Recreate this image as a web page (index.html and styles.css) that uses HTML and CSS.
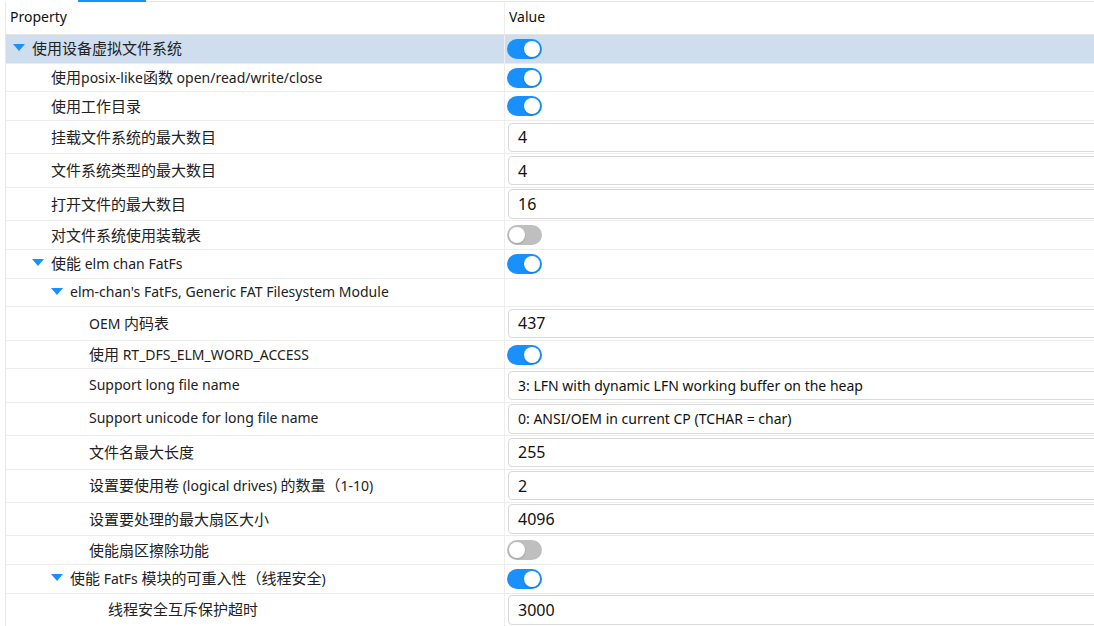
FILE: index.html
```html
<!DOCTYPE html>
<html lang="zh-CN">
<head>
<meta charset="utf-8">
<title>Property</title>
<link rel="stylesheet" href="styles.css">
</head>
<body>
<div class="topbar"><div class="tab-ind"></div><div class="tab-line"></div></div>
<div class="grid">
  <div class="row head"><div class="cell name">Property</div><div class="cell val">Value</div></div>

  <div class="row sw sel"><div class="cell name l0"><span class="caret"></span><span class="lbl"><span class="zh">使用设备虚拟文件系统</span></span></div><div class="cell val"><span class="toggle on"></span></div></div>
  <div class="row sw"><div class="cell name l1"><span class="sp"></span><span class="lbl"><span class="zh">使用</span>posix-like<span class="zh">函数</span> open/read/write/close</span></div><div class="cell val"><span class="toggle on"></span></div></div>
  <div class="row sw"><div class="cell name l1"><span class="sp"></span><span class="lbl"><span class="zh">使用工作目录</span></span></div><div class="cell val"><span class="toggle on"></span></div></div>
  <div class="row in"><div class="cell name l1"><span class="sp"></span><span class="lbl"><span class="zh">挂载文件系统的最大数目</span></span></div><div class="cell val"><div class="input num">4</div></div></div>
  <div class="row in"><div class="cell name l1"><span class="sp"></span><span class="lbl"><span class="zh">文件系统类型的最大数目</span></span></div><div class="cell val"><div class="input num">4</div></div></div>
  <div class="row in"><div class="cell name l1"><span class="sp"></span><span class="lbl"><span class="zh">打开文件的最大数目</span></span></div><div class="cell val"><div class="input num">16</div></div></div>
  <div class="row sw"><div class="cell name l1"><span class="sp"></span><span class="lbl"><span class="zh">对文件系统使用装载表</span></span></div><div class="cell val"><span class="toggle"></span></div></div>
  <div class="row sw"><div class="cell name l1"><span class="caret"></span><span class="lbl"><span class="zh">使能</span> elm chan FatFs</span></div><div class="cell val"><span class="toggle on"></span></div></div>
  <div class="row sw"><div class="cell name l2"><span class="caret"></span><span class="lbl">elm-chan's FatFs, Generic FAT Filesystem Module</span></div><div class="cell val"></div></div>
  <div class="row in"><div class="cell name l3"><span class="sp"></span><span class="lbl">OEM <span class="zh">内码表</span></span></div><div class="cell val"><div class="input num">437</div></div></div>
  <div class="row sw"><div class="cell name l3"><span class="sp"></span><span class="lbl"><span class="zh">使用</span> RT_DFS_ELM_WORD_ACCESS</span></div><div class="cell val"><span class="toggle on"></span></div></div>
  <div class="row in"><div class="cell name l3"><span class="sp"></span><span class="lbl">Support long file name</span></div><div class="cell val"><div class="input">3: LFN with dynamic LFN working buffer on the heap</div></div></div>
  <div class="row in"><div class="cell name l3"><span class="sp"></span><span class="lbl">Support unicode for long file name</span></div><div class="cell val"><div class="input">0: ANSI/OEM in current CP (TCHAR = char)</div></div></div>
  <div class="row in"><div class="cell name l3"><span class="sp"></span><span class="lbl"><span class="zh">文件名最大长度</span></span></div><div class="cell val"><div class="input num">255</div></div></div>
  <div class="row in"><div class="cell name l3"><span class="sp"></span><span class="lbl"><span class="zh">设置要使用卷</span> (logical drives) <span class="zh">的数量（</span>1-10)</span></div><div class="cell val"><div class="input num">2</div></div></div>
  <div class="row in"><div class="cell name l3"><span class="sp"></span><span class="lbl"><span class="zh">设置要处理的最大扇区大小</span></span></div><div class="cell val"><div class="input num">4096</div></div></div>
  <div class="row sw"><div class="cell name l3"><span class="sp"></span><span class="lbl"><span class="zh">使能扇区擦除功能</span></span></div><div class="cell val"><span class="toggle"></span></div></div>
  <div class="row sw"><div class="cell name l2"><span class="caret"></span><span class="lbl"><span class="zh">使能</span> FatFs <span class="zh">模块的可重入性（线程安全</span>)</span></div><div class="cell val"><span class="toggle on"></span></div></div>
  <div class="row in"><div class="cell name l4"><span class="sp"></span><span class="lbl"><span class="zh">线程安全互斥保护超时</span></span></div><div class="cell val"><div class="input num">3000</div></div></div>
</div>
</body>
</html>
```

FILE: styles.css
```css
* { box-sizing: border-box; }
html, body { margin: 0; padding: 0; background: #fff; }
body {
  width: 1094px;
  height: 626px;
  overflow: hidden;
  font-family: "Noto Sans", "Noto Sans CJK SC", sans-serif;
  font-size: 14px;
  color: #222;
}
.zh { font-family: "Noto Sans CJK SC", sans-serif; font-size: 15px; }
.lbl { white-space: pre; }
.topbar { position: relative; height: 2px; }
.tab-ind { position: absolute; left: 78px; top: 0; width: 68px; height: 2px; background: #1890ff; }
.tab-line { position: absolute; left: 146px; right: 0; top: 1px; height: 1px; background: #e6e6e6; }
.grid {
  margin-left: 5px;
  border-left: 1px solid #e8e8e8;
}
.row {
  display: grid;
  grid-template-columns: 499px 1fr;
  border-bottom: 1px solid #ececec;
}
.row.head { height: 33px; border-bottom: 1px solid #e4e4e4; color: #111; }
.row.head .cell { padding-bottom: 3px; }
.row.sw { height: 28.7px; }
.row.in { height: 33.4px; }
.row.sel { background: #cfdeee; }
.cell { display: flex; align-items: center; white-space: nowrap; overflow: hidden; }
.cell.name { border-right: 1px solid #eeeeee; padding-left: 4px; padding-bottom: 2px; }
.cell.val { padding-left: 2px; overflow: visible; }
.row.head .cell.val { padding-left: 4px; }
.l0 { padding-left: 7px !important; }
.l1 { padding-left: 26px !important; }
.l2 { padding-left: 45px !important; }
.l3 { padding-left: 64px !important; }
.l4 { padding-left: 83px !important; }
.caret {
  width: 0; height: 0;
  border-left: 6px solid transparent;
  border-right: 6px solid transparent;
  border-top: 7px solid #1890ff;
  margin-right: 7px;
  flex: none;
}
.sp { display: inline-block; width: 19px; flex: none; }
.toggle {
  position: relative;
  display: inline-block;
  width: 35px; height: 20px;
  border-radius: 10px;
  background: #bfbfbf;
  flex: none;
}
.toggle.on { background: #1890ff; }
.toggle::after {
  content: "";
  position: absolute;
  top: 2px; left: 2px;
  width: 16px; height: 16px;
  border-radius: 50%;
  background: #fff;
  box-shadow: 0 1px 2px rgba(0,35,11,0.2);
}
.toggle.on::after { left: 17px; }
.input {
  width: 620px;
  height: 29.4px;
  margin-left: 1px;
  border: 1px solid #d9d9d9;
  border-radius: 4px;
  padding-left: 9px;
  display: flex;
  align-items: center;
  color: #111;
  font-size: 14px;
}
.input.num { font-size: 16px; }
```
